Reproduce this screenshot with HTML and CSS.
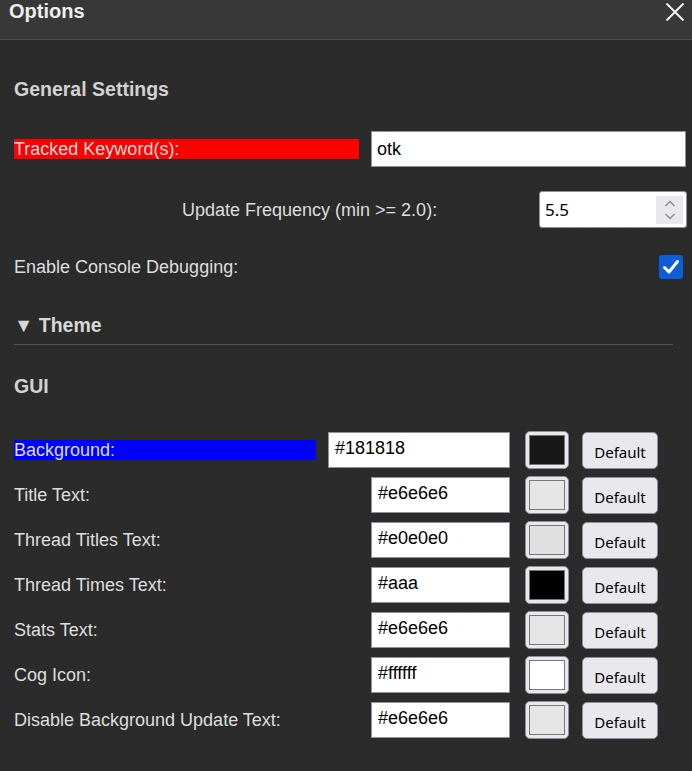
FILE: index.html
```html
<!DOCTYPE html>
<html>
<head>
<meta charset="utf-8">
<link rel="stylesheet" href="styles.css">
</head>
<body>
<div class="dialog">
  <div class="header">
    <span class="title">Options</span>
    <svg class="close" width="20" height="18" viewBox="0 0 20 18"><path d="M1.5 0.5 L18.5 17.5 M18.5 0.5 L1.5 17.5" stroke="#f2f2f2" stroke-width="2" fill="none"/></svg>
  </div>
  <div class="content">
    <h3 class="section general">General Settings</h3>
    <div class="row tracked">
      <span class="label red">Tracked Keyword(s):</span>
      <div class="textbox wide">otk</div>
    </div>
    <div class="row freq">
      <span class="label centered">Update Frequency (min &gt;= 2.0):</span>
      <div class="numbox">
        <span class="num">5.5</span>
        <span class="spin">
          <svg width="14" height="24" viewBox="0 0 14 24"><path d="M2.5 8 L7 3.5 L11.5 8 M2.5 16 L7 20.5 L11.5 16" stroke="#8a8a90" stroke-width="1.5" fill="none"/></svg>
        </span>
      </div>
    </div>
    <div class="row debug">
      <span class="label">Enable Console Debugging:</span>
      <span class="check">
        <svg width="24" height="24" viewBox="0 0 24 24"><path d="M5.5 12.5 L10 17 L18.5 6.5" stroke="#fff" stroke-width="3" fill="none" stroke-linecap="round" stroke-linejoin="round"/></svg>
      </span>
    </div>
    <div class="theme">▼ Theme</div>
    <h3 class="section gui">GUI</h3>
    <div class="colors">
      <div class="crow">
        <span class="label blue">Background:</span>
        <div class="ctrls">
          <div class="textbox cin first">#181818</div>
          <span class="swatch"><span class="sw" style="background:#181818"></span></span>
          <span class="btn">Default</span>
        </div>
      </div>
      <div class="crow">
        <span class="label">Title Text:</span>
        <div class="ctrls">
          <div class="textbox cin">#e6e6e6</div>
          <span class="swatch"><span class="sw" style="background:#e6e6e6"></span></span>
          <span class="btn">Default</span>
        </div>
      </div>
      <div class="crow">
        <span class="label">Thread Titles Text:</span>
        <div class="ctrls">
          <div class="textbox cin">#e0e0e0</div>
          <span class="swatch"><span class="sw" style="background:#e0e0e0"></span></span>
          <span class="btn">Default</span>
        </div>
      </div>
      <div class="crow">
        <span class="label">Thread Times Text:</span>
        <div class="ctrls">
          <div class="textbox cin">#aaa</div>
          <span class="swatch"><span class="sw" style="background:#000000"></span></span>
          <span class="btn">Default</span>
        </div>
      </div>
      <div class="crow">
        <span class="label">Stats Text:</span>
        <div class="ctrls">
          <div class="textbox cin">#e6e6e6</div>
          <span class="swatch"><span class="sw" style="background:#e6e6e6"></span></span>
          <span class="btn">Default</span>
        </div>
      </div>
      <div class="crow">
        <span class="label">Cog Icon:</span>
        <div class="ctrls">
          <div class="textbox cin">#ffffff</div>
          <span class="swatch"><span class="sw" style="background:#ffffff"></span></span>
          <span class="btn">Default</span>
        </div>
      </div>
      <div class="crow">
        <span class="label">Disable Background Update Text:</span>
        <div class="ctrls">
          <div class="textbox cin">#e6e6e6</div>
          <span class="swatch"><span class="sw" style="background:#e6e6e6"></span></span>
          <span class="btn">Default</span>
        </div>
      </div>
    </div>
  </div>
</div>
</body>
</html>
```
FILE: styles.css
```css
html, body {
  margin: 0;
  padding: 0;
  background: #2b2b2b;
}
body {
  font-family: "Liberation Sans", Arial, sans-serif;
  color: #dedede;
  width: 692px;
  height: 771px;
  overflow: hidden;
}
.header {
  height: 39px;
  background: #383838;
  border-bottom: 1px solid #4d4d4d;
  display: flex;
  justify-content: space-between;
  align-items: flex-start;
  padding: 0 6px 0 9px;
}
.title {
  font-size: 20px;
  font-weight: bold;
  color: #eeeeee;
  line-height: 23px;
  margin-top: 0;
}
.close {
  margin-top: 3px;
  margin-right: 1px;
}
.content {
  padding: 0 6px 0 14px;
  display: flex;
  flex-direction: column;
}
.section {
  margin: 0;
  font-size: 19.5px;
  font-weight: bold;
  color: #d2d2d2;
  line-height: 23px;
}
.general { margin-top: 38px; }
.row {
  display: flex;
  align-items: center;
  justify-content: space-between;
}
.label {
  font-size: 18px;
  line-height: 20px;
  color: #dedede;
}
.red {
  background: #ff0000;
  width: 345px;
}
.blue {
  background: #0000ff;
  width: 302px;
}
.tracked { margin-top: 30px; }
.textbox {
  box-sizing: border-box;
  height: 36px;
  background: #ffffff;
  border: 1px solid #8f8f9d;
  color: #000;
  font-size: 18px;
  line-height: 34px;
  padding-left: 5px;
}
.wide { width: 315px; }
.freq { margin-top: 24px; }
.centered { padding-left: 168px; }
.numbox {
  box-sizing: border-box;
  width: 148px;
  height: 37px;
  background: #fff;
  border: 1px solid #8f8f9d;
  border-radius: 3px;
  display: flex;
  align-items: center;
  justify-content: space-between;
  padding: 0 3px 0 5px;
  margin-right: -1px;
}
.num {
  font-family: "Noto Sans", sans-serif;
  font-size: 17px;
  color: #000;
}
.spin {
  width: 27px;
  height: 28px;
  background: #e9e9ed;
  display: flex;
  align-items: center;
  justify-content: center;
}
.debug {
  margin-top: 27px;
  height: 24px;
}
.check {
  width: 24px;
  height: 24px;
  background: #0b5ed7;
  border-radius: 3px;
  margin-right: 3px;
  display: flex;
}
.theme {
  margin-top: 35px;
  margin-right: 13px;
  font-size: 19.5px;
  font-weight: bold;
  color: #d8d8d8;
  line-height: 23px;
  padding-bottom: 7px;
  border-bottom: 1px solid #555555;
}
.gui { margin-top: 30px; }
.colors {
  margin-top: 34px;
  display: flex;
  flex-direction: column;
  gap: 9px;
  margin-right: 28px;
}
.crow {
  display: flex;
  align-items: center;
  justify-content: space-between;
  height: 36px;
}
.ctrls {
  display: flex;
  align-items: center;
}
.cin {
  width: 139px;
  line-height: 31px;
  padding-left: 6px;
}
.cin.first { width: 182px; }
.swatch {
  box-sizing: border-box;
  width: 44px;
  height: 38px;
  margin-left: 15px;
  background: #e9e9ed;
  border: 1px solid #8f8f9d;
  border-radius: 5px;
  padding: 3px;
  display: flex;
}
.sw {
  flex: 1;
  border: 1px solid #777;
}
.btn {
  box-sizing: border-box;
  width: 76px;
  height: 37px;
  margin-left: 13px;
  background: #e9e9ed;
  border: 1px solid #8f8f9d;
  border-radius: 5px;
  font-family: "Noto Sans", sans-serif;
  font-size: 15px;
  color: #000;
  display: flex;
  align-items: center;
  justify-content: center;
  padding-top: 4px;
}
```
